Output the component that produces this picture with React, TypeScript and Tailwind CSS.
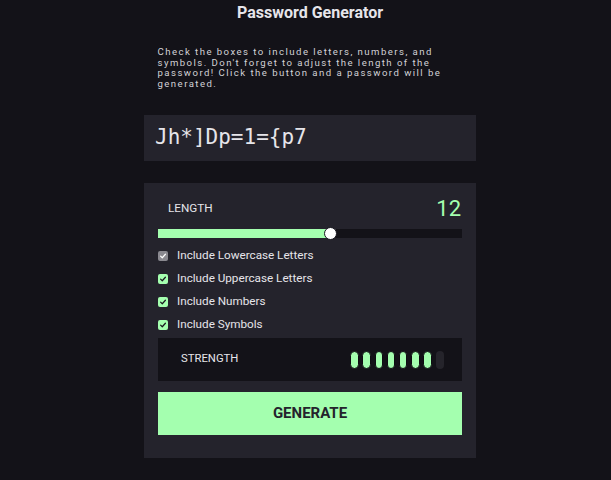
import React from "react";

const options = [
  { label: "Include Lowercase Letters", checked: true, muted: true },
  { label: "Include Uppercase Letters", checked: true, muted: false },
  { label: "Include Numbers", checked: true, muted: false },
  { label: "Include Symbols", checked: true, muted: false },
];

const Check: React.FC<{ muted: boolean }> = ({ muted }) => (
  <span
    className={`flex h-[10px] w-[10px] items-center justify-center rounded-[2px] ${
      muted ? "bg-[#8a8990]" : "bg-[#a4ffaf]"
    }`}
  >
    <svg viewBox="0 0 10 10" className="h-[8px] w-[8px]">
      <path
        d="M2 5.2 L4.1 7.2 L8 2.8"
        fill="none"
        stroke={muted ? "#ffffff" : "#18171f"}
        strokeWidth="1.5"
        strokeLinecap="round"
        strokeLinejoin="round"
      />
    </svg>
  </span>
);

export default function App() {
  const strength = 7;
  return (
    <div className="flex min-h-screen flex-col items-center bg-[#131218] pl-[9px] font-['Roboto',sans-serif] text-[#e6e5ea]">
      <h1 className="mt-[3px] text-[16px] font-bold leading-[20px]">Password Generator</h1>

      <p className="mt-[24px] w-[305px] text-[9.6px] leading-[10.5px] tracking-[1.45px] text-[#d2d1d6]">
        Check the boxes to include letters, numbers, and symbols. Don't forget to adjust the length of the
        password! Click the button and a password will be generated.
      </p>

      <div className="mt-[26px] flex h-[46px] w-[332px] items-center bg-[#24232c] px-[11px] font-['DejaVu_Sans_Mono',monospace] text-[21px] text-[#e6e5ea]">
        Jh*]Dp=1={"{"}p7
      </div>

      <div className="mt-[22px] flex w-[332px] flex-col bg-[#24232c] px-[14px] pt-[13px] pb-[23px]">
        <div className="flex h-[26px] items-center justify-between">
          <span className="pl-[10px] text-[11.7px] text-[#e6e5ea]">LENGTH</span>
          <span className="pr-[1px] text-[22px] leading-none text-[#a4ffaf]">12</span>
        </div>

        <div className="relative mt-[7px] h-[9px] bg-[#131218]">
          <div className="h-full w-[173px] bg-[#a4ffaf]" />
          <div className="absolute left-[166px] top-[-2px] h-[13px] w-[13px] rounded-full border border-[#18171f] bg-white" />
        </div>

        <div className="mt-[6px] flex flex-col">
          {options.map((o) => (
            <label key={o.label} className="flex h-[23px] items-center gap-[9px] text-[11.7px] text-[#e6e5ea]">
              <Check muted={o.muted} />
              {o.label}
            </label>
          ))}
        </div>

        <div className="mt-[2px] flex h-[43px] items-center justify-between bg-[#131218] pl-[23px] pr-[18px]">
          <span className="text-[11.3px] text-[#e6e5ea]">STRENGTH</span>
          <div className="flex gap-[3.7px]">
            {Array.from({ length: 8 }).map((_, i) => (
              <span
                key={i}
                className={`h-[18px] w-[8.5px] rounded-full ${
                  i < strength ? "border border-[#0e0d12] bg-[#a4ffaf]" : "bg-[#25242b]"
                }`}
              />
            ))}
          </div>
        </div>

        <button className="mt-[11px] flex h-[43px] items-center justify-center bg-[#a4ffaf] text-[15px] font-bold text-[#24232c]">
          GENERATE
        </button>
      </div>
    </div>
  );
}
